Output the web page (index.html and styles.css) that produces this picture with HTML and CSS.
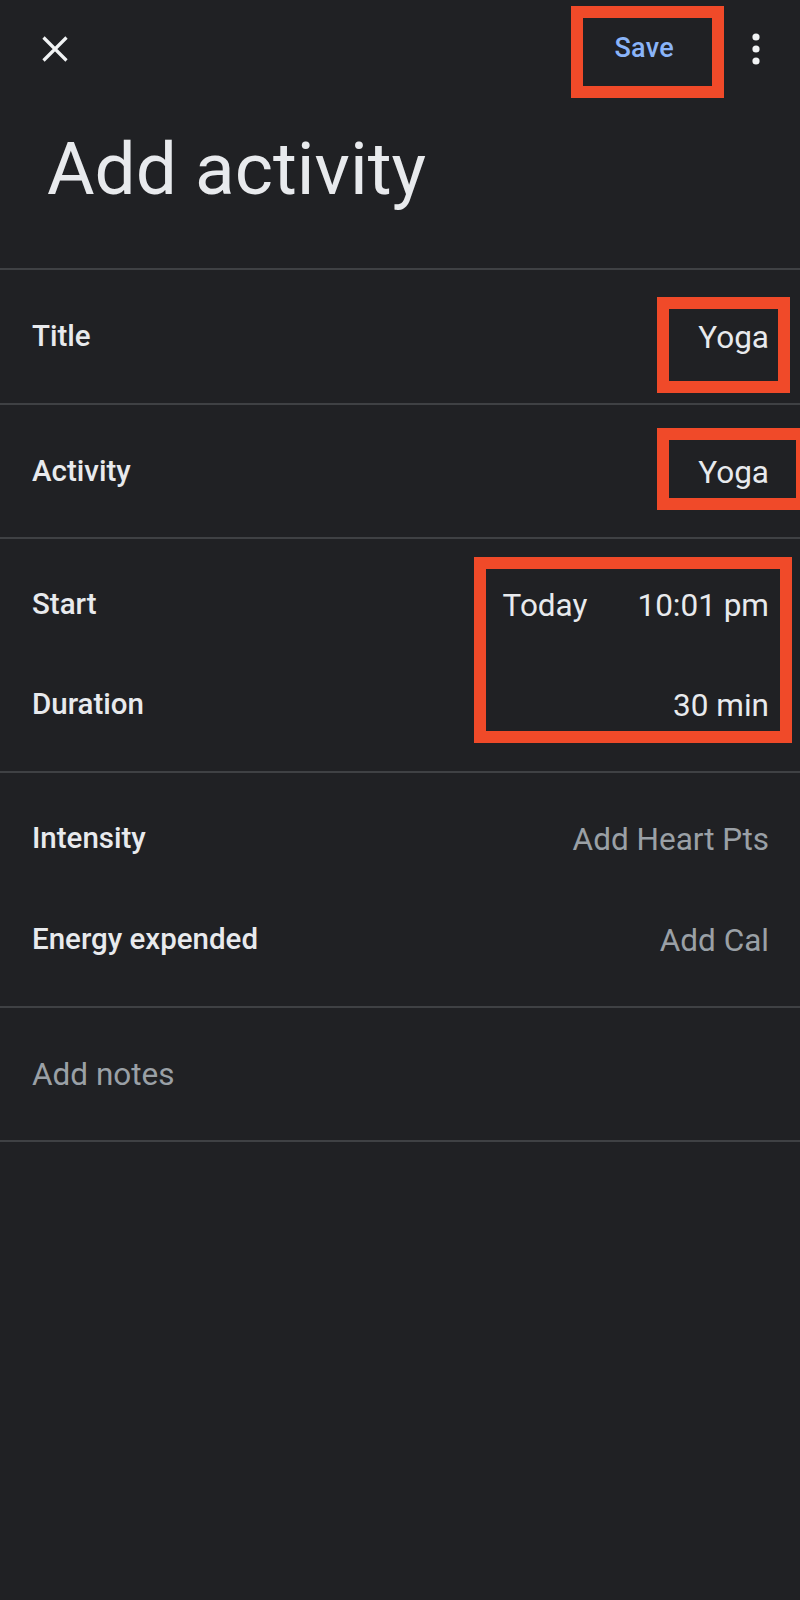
FILE: index.html
```html
<!DOCTYPE html>
<html lang="en">
<head>
<meta charset="utf-8">
<title>Add activity</title>
<link rel="stylesheet" href="styles.css">
</head>
<body>
<div class="screen">
  <header class="topbar">
    <svg class="close" width="26" height="26" viewBox="0 0 26 26" aria-label="Close">
      <path d="M1.5 1.5 L24.5 24.5 M24.5 1.5 L1.5 24.5" stroke="#f1f3f4" stroke-width="3.2" fill="none"/>
    </svg>
    <div class="spacer"></div>
    <span class="save hl hl-save">Save</span>
    <svg class="more" width="24" height="32" viewBox="0 0 24 32" aria-label="More options">
      <circle cx="12" cy="4" r="3.6" fill="#f1f3f4"/>
      <circle cx="12" cy="16" r="3.6" fill="#f1f3f4"/>
      <circle cx="12" cy="28" r="3.6" fill="#f1f3f4"/>
    </svg>
  </header>

  <h1 class="page-title">Add activity</h1>

  <div class="row">
    <span class="label">Title</span>
    <span class="value hl hl-title">Yoga</span>
  </div>

  <div class="row row-activity">
    <span class="label">Activity</span>
    <span class="value hl hl-activity">Yoga</span>
  </div>

  <div class="pair pair-time">
    <div class="labels">
      <span class="label">Start</span>
      <span class="label">Duration</span>
    </div>
    <div class="values hl hl-time">
      <div class="value time-line"><span>Today</span><span>10:01 pm</span></div>
      <div class="value">30 min</div>
    </div>
  </div>

  <div class="pair pair-energy">
    <div class="labels">
      <span class="label">Intensity</span>
      <span class="label">Energy expended</span>
    </div>
    <div class="values">
      <div class="value muted">Add Heart Pts</div>
      <div class="value muted">Add Cal</div>
    </div>
  </div>

  <div class="notes">Add notes</div>
</div>
</body>
</html>
```

FILE: styles.css
```css
html, body {
  margin: 0;
  padding: 0;
  background: #202124;
}

body {
  font-family: Roboto, "Liberation Sans", Arial, sans-serif;
  color: #e8eaed;
}

.screen {
  width: 800px;
  min-height: 1600px;
  background: #202124;
  overflow: hidden;
}

/* ---------- top bar ---------- */
.topbar {
  display: flex;
  align-items: flex-start;
  height: 98px;
  padding: 0 32px 0 42px;
}

.close {
  display: block;
  margin-top: 36px;
}

.spacer {
  flex: 1;
}

.save {
  margin-top: 32px;
  font-size: 27px;
  line-height: 32px;
  font-weight: 500;
  color: #8ab4f8;
  letter-spacing: 0.3px;
}

.more {
  display: block;
  margin-top: 33px;
  margin-left: 70px;
}

/* ---------- page title ---------- */
.page-title {
  margin: 0;
  padding: 29px 0 57px 47px;
  font-size: 73px;
  line-height: 84px;
  font-weight: 400;
  color: #e8eaed;
  border-bottom: 2px solid #3f4144;
}

/* ---------- rows ---------- */
.row {
  display: flex;
  justify-content: space-between;
  align-items: flex-start;
  padding: 48px 31px 45px 32px;
  border-bottom: 2px solid #3f4144;
}

.row-activity {
  padding-bottom: 44px;
}

.label {
  font-size: 29.5px;
  line-height: 36px;
  font-weight: 500;
  color: #e8eaed;
}

.value {
  font-size: 31.5px;
  line-height: 40px;
  font-weight: 400;
  color: #e8eaed;
  text-align: right;
}

.muted {
  color: #9aa0a6;
}

.pair {
  display: flex;
  justify-content: space-between;
  align-items: flex-start;
  padding: 47px 31px 45px 32px;
  border-bottom: 2px solid #3f4144;
}

.labels {
  display: flex;
  flex-direction: column;
  gap: 64px;
}

.values {
  display: flex;
  flex-direction: column;
  align-items: flex-end;
  gap: 60px;
}

.pair-energy .labels {
  gap: 65px;
}

.pair-energy .values {
  gap: 61px;
}

.time-line {
  display: flex;
  gap: 50px;
}

.notes {
  padding: 47px 32px 45px;
  font-size: 31.5px;
  line-height: 40px;
  color: #9aa0a6;
  border-bottom: 2px solid #3f4144;
}

/* ---------- red annotation boxes (overlay) ---------- */
.hl {
  position: relative;
}

.hl::after {
  content: "";
  position: absolute;
  border: 12px solid #f04a29;
  pointer-events: none;
}

.hl-save::after {
  top: -26px;
  bottom: -34px;
  left: -43px;
  right: -50px;
}

.hl-title::after {
  top: -21px;
  bottom: -35px;
  left: -41px;
  right: -21px;
}

.hl-activity::after {
  top: -25px;
  bottom: -17px;
  left: -41px;
  right: -39px;
}

.hl-time::after {
  top: -29px;
  bottom: -17px;
  left: -29px;
  right: -23px;
}
```
